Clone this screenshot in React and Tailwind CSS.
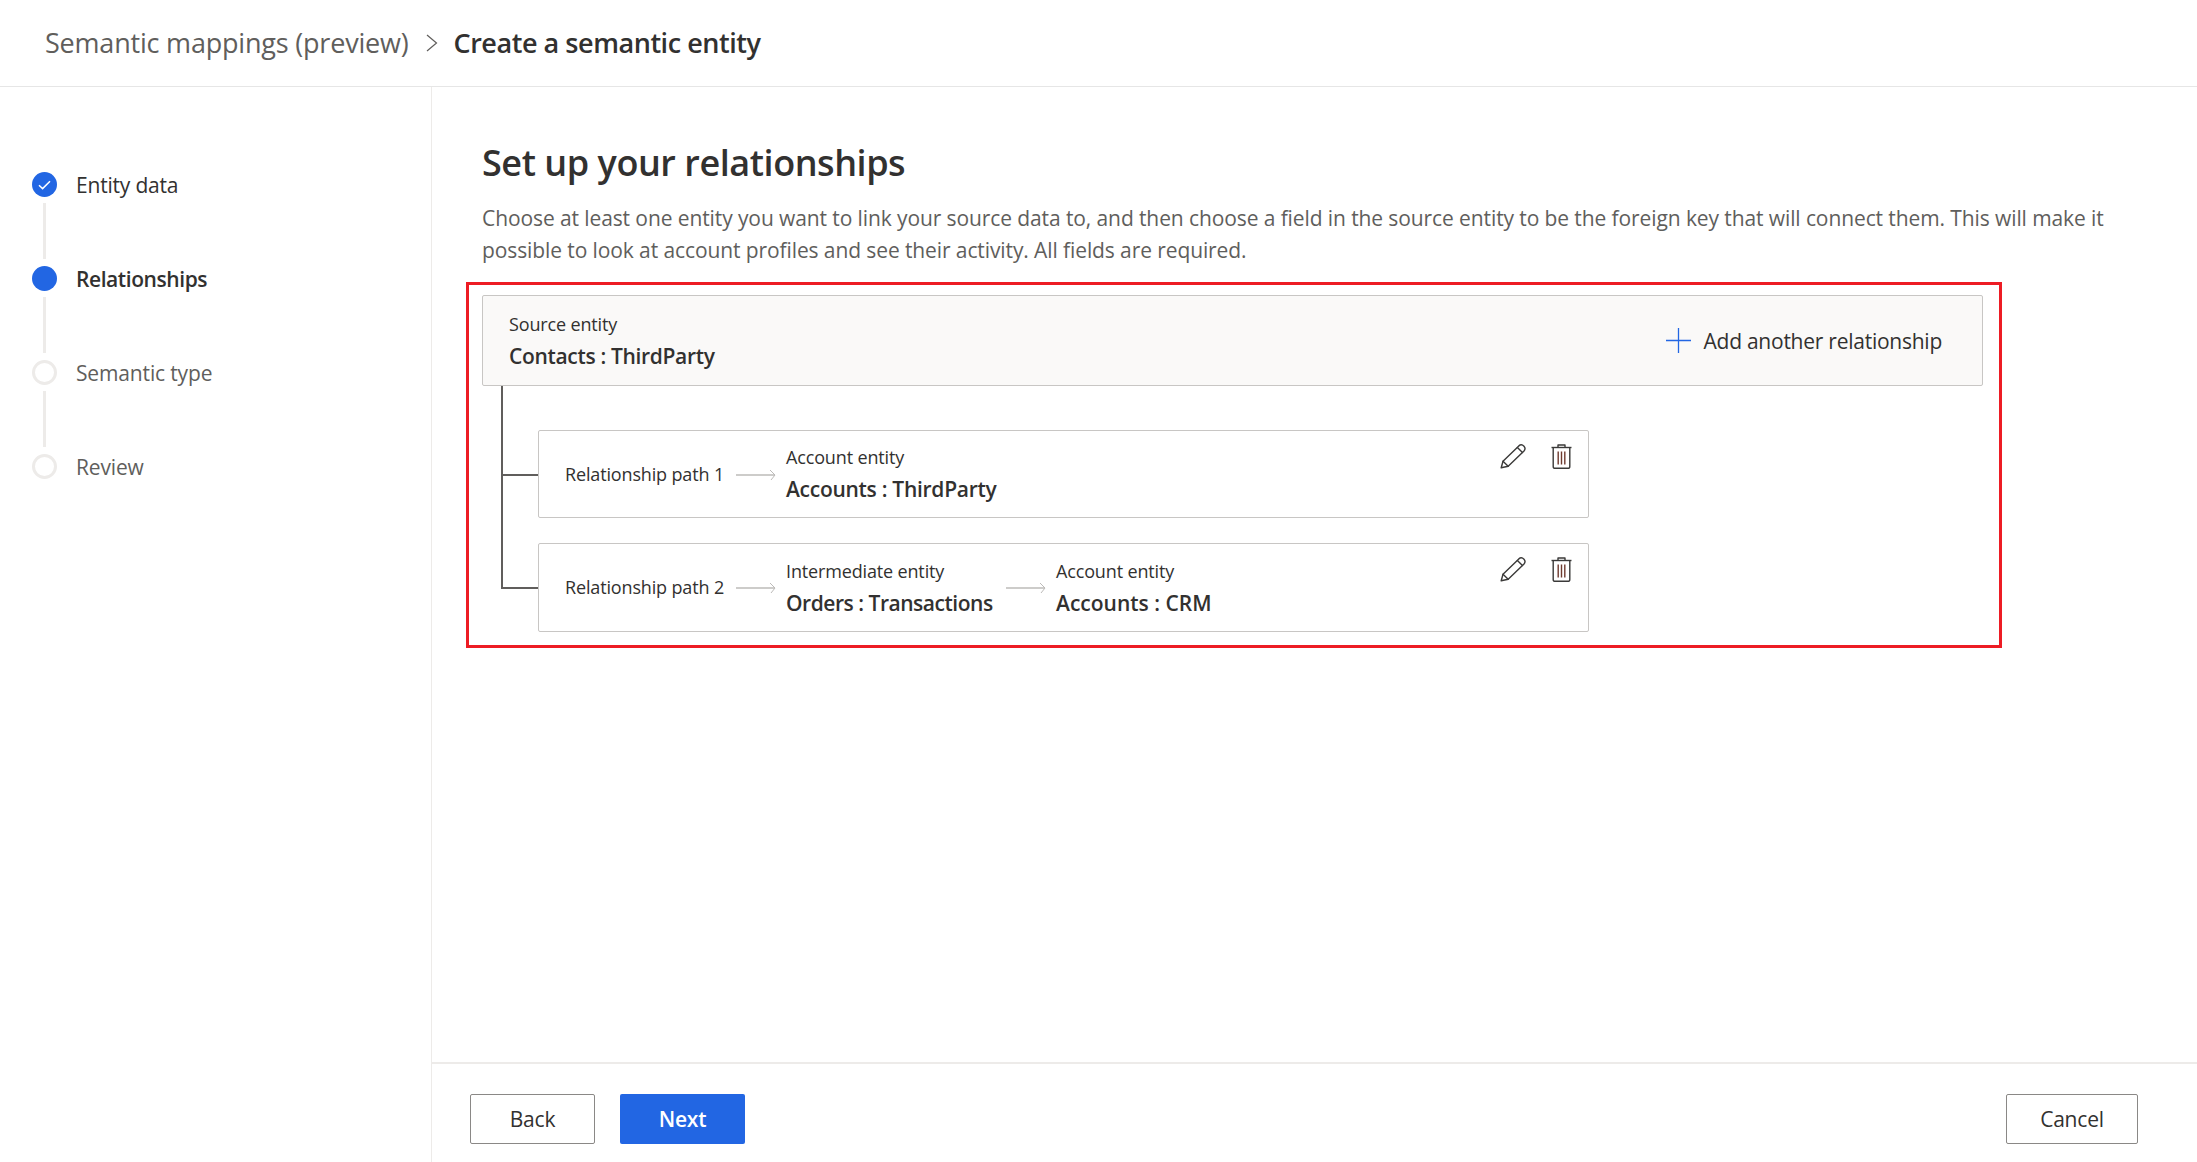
import React from "react";

const Pencil = () => (
  <svg width="26" height="25" viewBox="0 0 26 25" fill="none" stroke="#3b3a39" strokeWidth="1.4" strokeLinejoin="round" strokeLinecap="round">
    <path d="M1.2 23.8 L3 17.2 L18.8 1.9 C20.3 0.6 22.6 0.8 24 2.2 C25.2 3.6 25.2 5.6 24 7 L8.2 22.2 Z" />
    <path d="M3 17.2 L8.2 22.2" />
    <path d="M17.4 3.4 L22.5 8.4" />
  </svg>
);

const Trash = () => (
  <svg width="21" height="25" viewBox="0 0 21 25" fill="none" stroke="#3b3a39" strokeWidth="1.4" strokeLinejoin="round">
    <path d="M0.5 3.5 H20.5" />
    <path d="M7 3.5 V1 H14 V3.5" />
    <path d="M2.2 3.5 V22.4 C2.2 23.6 3 24.3 4.2 24.3 H16.8 C18 24.3 18.8 23.6 18.8 22.4 V3.5" />
    <path d="M7.2 7.5 V20.5 M10.5 7.5 V20.5 M13.8 7.5 V20.5" stroke="#6f3b30" />
  </svg>
);

const Arrow = () => (
  <svg width="40" height="12" viewBox="0 0 40 12" fill="none" stroke="#bdbbb9" strokeWidth="1.6" className="mt-[1px]">
    <path d="M0 6 H39" />
    <path d="M34 1 L39 6 L35 11" strokeWidth="1" />
  </svg>
);

const steps = [
  { label: "Entity data", state: "done" },
  { label: "Relationships", state: "active" },
  { label: "Semantic type", state: "todo" },
  { label: "Review", state: "todo" },
];

const Step = ({ label, state, last }) => (
  <div className="flex gap-[19px]">
    <div className="flex flex-col items-center w-[25px]">
      {state === "done" && (
        <div className="w-[25px] h-[25px] rounded-full bg-[#2266e3] flex items-center justify-center">
          <svg width="13" height="10" viewBox="0 0 13 10" fill="none" stroke="#ffffff" strokeWidth="1.5">
            <path d="M1 5.2 L4.6 8.6 L12 1.2" />
          </svg>
        </div>
      )}
      {state === "active" && <div className="w-[25px] h-[25px] rounded-full bg-[#2266e3]" />}
      {state === "todo" && <div className="w-[25px] h-[25px] rounded-full border-[3px] border-[#edebe9] bg-white" />}
      {!last && <div className="w-[3px] h-[56px] mt-[6px] mb-[7px] bg-[#edebe9]" />}
    </div>
    <div
      className={
        "h-[25px] leading-[27px] text-[21px] whitespace-nowrap " +
        (state === "active"
          ? "font-semibold text-[#323130] tracking-[-0.42px]"
          : state === "done"
            ? "text-[#323130] tracking-[-0.2px]"
            : "text-[#605e5c] tracking-[-0.15px]")
      }
    >
      {label}
    </div>
  </div>
);

const Entity = ({ top, bottom, track = "tracking-[-0.33px]" }) => (
  <div className="flex flex-col">
    <div className="text-[18px] leading-[24px] text-[#323130] tracking-[-0.15px] whitespace-nowrap">{top}</div>
    <div className={"text-[21px] leading-[28px] mt-[6px] font-semibold text-[#323130] whitespace-nowrap " + track}>{bottom}</div>
  </div>
);

const PathCard = ({ label, children, height }) => (
  <div className={"w-[1051px] border border-[#c8c6c4] rounded-[2px] bg-white flex items-start justify-between pl-[26px] pr-[16px] " + height}>
    <div className="flex items-center h-full">
      <div className="text-[18px] text-[#323130] tracking-[-0.15px] whitespace-nowrap w-[171px]">{label}</div>
      {children}
    </div>
    <div className="flex items-start gap-[25px] pt-[13px]">
      <Pencil />
      <Trash />
    </div>
  </div>
);

const Button = ({ children, primary, wide }) => (
  <button
    className={
      "h-[50px] pt-[2px] rounded-[2px] text-[21px] tracking-[-0.2px] flex items-center justify-center " +
      (wide ? "w-[132px] " : "w-[125px] ") +
      (primary ? "bg-[#2266e3] text-white font-semibold" : "bg-white border border-[#8a8886] text-[#323130] font-medium")
    }
  >
    {children}
  </button>
);

export default function App() {
  return (
    <div className="w-full h-screen bg-white flex flex-col overflow-hidden font-['Open_Sans',sans-serif]">
      <header className="h-[87px] shrink-0 border-b border-[#e6e6e6] flex items-center pl-[45px]">
        <span className="text-[27px] text-[#605e5c] tracking-[-0.2px] whitespace-nowrap">Semantic mappings (preview)</span>
        <svg width="12" height="18" viewBox="0 0 12 18" fill="none" stroke="#605e5c" strokeWidth="1.2" className="ml-[17px] mr-[16px]">
          <path d="M1 1 L10.5 9 L1 17" />
        </svg>
        <span className="text-[27px] font-semibold text-[#323130] tracking-[-0.45px] whitespace-nowrap">Create a semantic entity</span>
      </header>
      <div className="flex-1 flex min-h-0">
        <aside className="w-[432px] shrink-0 border-r border-[#edebe9] pt-[85px] pl-[32px]">
          {steps.map((s, i) => (
            <Step key={s.label} label={s.label} state={s.state} last={i === steps.length - 1} />
          ))}
        </aside>
        <main className="flex-1 flex flex-col min-w-0">
          <div className="flex-1 pl-[51px] pt-[50px]">
            <h1 className="-ml-[1px] text-[36px] leading-[52px] font-semibold text-[#323130] tracking-[-0.45px] whitespace-nowrap">Set up your relationships</h1>
            <p className="-ml-[1px] mt-[13px] w-[1640px] text-[21px] leading-[32px] text-[#605e5c] tracking-[-0.1px]">
              Choose at least one entity you want to link your source data to, and then choose a field in the source entity to be the foreign key that will connect them. This will make it possible to look at account profiles and see their activity. All fields are required.
            </p>
            <section className="mt-[16px] -ml-[17px] w-[1536px] h-[366px] border-[3px] border-[#ed1c24] pt-[10px] pl-[13px]">
              <div className="w-[1501px] h-[91px] border border-[#c8c6c4] rounded-[2px] bg-[#faf9f8] flex items-center justify-between pl-[26px] pr-[40px]">
                <Entity top="Source entity" bottom="Contacts : ThirdParty" />
                <div className="flex items-center gap-[13px]">
                  <svg width="25" height="25" viewBox="0 0 25 25" fill="none" stroke="#2266e3" strokeWidth="1.3">
                    <path d="M12.5 0 V25 M0 12.5 H25" />
                  </svg>
                  <span className="pt-[2px] text-[21px] text-[#323130] tracking-[-0.25px] whitespace-nowrap">Add another relationship</span>
                </div>
              </div>
              <div className="flex">
                <div className="w-[37px] ml-[19px] shrink-0 flex flex-col">
                  <div className="h-[90px] border-l-2 border-b-2 border-[#605e5c]" />
                  <div className="h-[113px] border-l-2 border-b-2 border-[#605e5c]" />
                </div>
                <div className="flex flex-col gap-[25px] pt-[44px]">
                  <PathCard label="Relationship path 1" height="h-[88px]">
                    <Arrow />
                    <div className="ml-[10px]">
                      <Entity top="Account entity" bottom="Accounts : ThirdParty" track="tracking-[-0.28px]" />
                    </div>
                  </PathCard>
                  <PathCard label="Relationship path 2" height="h-[89px]">
                    <Arrow />
                    <div className="ml-[10px] w-[220px]">
                      <Entity top="Intermediate entity" bottom="Orders : Transactions" track="tracking-[-0.47px]" />
                    </div>
                    <Arrow />
                    <div className="ml-[10px]">
                      <Entity top="Account entity" bottom="Accounts : CRM" track="tracking-[0px]" />
                    </div>
                  </PathCard>
                </div>
              </div>
            </section>
          </div>
          <footer className="h-[100px] shrink-0 border-t-2 border-[#edebe9] flex items-start justify-between pl-[38px] pr-[59px] pt-[30px]">
            <div className="flex gap-[25px]">
              <Button>Back</Button>
              <Button primary>Next</Button>
            </div>
            <Button wide>Cancel</Button>
          </footer>
        </main>
      </div>
    </div>
  );
}
